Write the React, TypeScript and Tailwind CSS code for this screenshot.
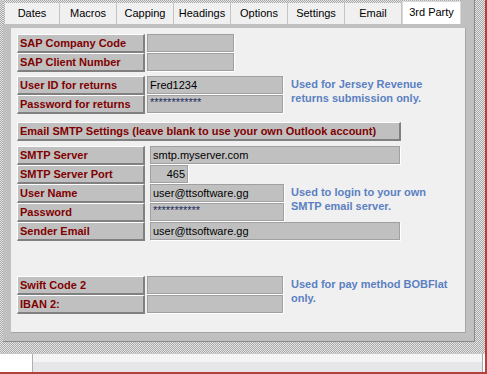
import React from "react";

const noise =
  "bg-[repeating-conic-gradient(#a9a9a9_0%_25%,#e4e4e4_0%_50%)] bg-[length:2px_2px]";

function Label({ children, w = "w-[128px]" }: { children: React.ReactNode; w?: string }) {
  return (
    <div
      className={`${w} h-[19px] shrink-0 bg-[#c0c0c0] border-t border-l border-b-2 border-r-2 border-t-white border-l-white border-b-[#808080] border-r-[#808080] pl-[2px] flex items-center text-[#800000] font-bold whitespace-nowrap leading-none`}
    >
      {children}
    </div>
  );
}

function Value({
  w,
  children,
  right,
  pwd,
}: {
  w: string;
  children?: React.ReactNode;
  right?: boolean;
  pwd?: boolean;
}) {
  return (
    <div
      className={`${w} h-[18px] shrink-0 bg-[#c0c0c0] border border-[#a0a0a0] shadow-[1px_1px_0_#ffffff] flex ${
        pwd ? "items-start pt-[1px] text-[#1c2c5c]" : "items-center text-black"
      } ${right ? "justify-end pr-[2px]" : "pl-[2px]"} whitespace-nowrap leading-none`}
    >
      {children}
    </div>
  );
}

function Help({ children, ml }: { children: React.ReactNode; ml: string }) {
  return (
    <div className={`${ml} pt-[1px] font-bold text-[#5b80c2] leading-[14px] whitespace-nowrap`}>
      {children}
    </div>
  );
}

const tabs = [
  { name: "Dates", w: "w-[55px]" },
  { name: "Macros", w: "w-[57px]" },
  { name: "Capping", w: "w-[57px]" },
  { name: "Headings", w: "w-[57px]" },
  { name: "Options", w: "w-[57px]" },
  { name: "Settings", w: "w-[57px]" },
  { name: "Email", w: "w-[57px]" },
];

export default function App() {
  return (
    <div className="w-[487px] h-[374px] border-r-2 border-b-2 border-[#b4403c] bg-white flex flex-col font-['Liberation_Sans',Arial,sans-serif] text-[11px] overflow-hidden">
      <div className={`h-[353px] flex shrink-0 ${noise}`}>
        <div className="w-[3px] shrink-0" />
        <div className="w-[472px] h-[342px] shrink-0 flex flex-col bg-[#c0c0c0] border-r border-b border-[#8a8a8a]">
          {/* tabs */}
          <div className={`h-[24px] shrink-0 flex items-end pl-[2px] ${noise}`}>
            {tabs.map((t) => (
              <div
                key={t.name}
                className={`${t.w} h-[21px] shrink-0 bg-[#f0f0f0] border-r border-[#c4c4c4] flex items-center justify-center text-black leading-none`}
              >
                {t.name}
              </div>
            ))}
            <div className="w-[59px] h-[23px] shrink-0 bg-white border-t border-l border-r border-[#d8d8d8] flex items-center justify-center text-black leading-none pb-[2px]">
              3rd Party
            </div>
            <div className="flex-1 self-stretch bg-[#c0c0c0]" />
          </div>
          {/* panel */}
          <div className="flex-1 flex pt-[4px] pl-[8px] pr-[8px] pb-[8px]">
            <div className="flex-1 bg-[#f0f0f0] border-r border-b border-[#a4a4a4] pl-[6px] pt-[6px] flex flex-col">
              {/* SAP */}
              <div className="flex flex-col">
                <div className="flex gap-[2px]">
                  <Label>SAP Company Code</Label>
                  <Value w="w-[87px]" />
                </div>
                <div className="flex gap-[2px]">
                  <Label>SAP Client Number</Label>
                  <Value w="w-[87px]" />
                </div>
              </div>
              {/* Jersey */}
              <div className="flex mt-[4px]">
                <div className="flex flex-col">
                  <div className="flex gap-[2px]">
                    <Label>User ID for returns</Label>
                    <Value w="w-[136px]">Fred1234</Value>
                  </div>
                  <div className="flex gap-[2px]">
                    <Label>Password for returns</Label>
                    <Value w="w-[136px]" pwd>
                      ************
                    </Value>
                  </div>
                </div>
                <Help ml="ml-[8px]">
                  Used for Jersey Revenue
                  <br />
                  returns submission only.
                </Help>
              </div>
              {/* Email button */}
              <div className="mt-[8px]">
                <Label w="w-[384px]">Email SMTP Settings (leave blank to use your own Outlook account)</Label>
              </div>
              {/* SMTP */}
              <div className="flex flex-col mt-[5px]">
                <div className="flex gap-[5px]">
                  <Label>SMTP Server</Label>
                  <Value w="w-[250px]">smtp.myserver.com</Value>
                </div>
                <div className="flex gap-[5px]">
                  <Label>SMTP Server Port</Label>
                  <Value w="w-[38px]" right>
                    465
                  </Value>
                </div>
                <div className="flex">
                  <div className="flex flex-col">
                    <div className="flex gap-[5px]">
                      <Label>User Name</Label>
                      <Value w="w-[134px]">user@ttsoftware.gg</Value>
                    </div>
                    <div className="flex gap-[5px]">
                      <Label>Password</Label>
                      <Value w="w-[134px]" pwd>
                        ***********
                      </Value>
                    </div>
                  </div>
                  <Help ml="ml-[7px]">
                    Used to login to your own
                    <br />
                    SMTP email server.
                  </Help>
                </div>
                <div className="flex gap-[5px]">
                  <Label>Sender Email</Label>
                  <Value w="w-[250px]">user@ttsoftware.gg</Value>
                </div>
              </div>
              {/* Swift */}
              <div className="flex mt-[35px]">
                <div className="flex flex-col">
                  <div className="flex gap-[2px]">
                    <Label>Swift Code 2</Label>
                    <Value w="w-[136px]" />
                  </div>
                  <div className="flex gap-[2px]">
                    <Label>IBAN 2:</Label>
                    <Value w="w-[136px]" />
                  </div>
                </div>
                <Help ml="ml-[8px]">
                  Used for pay method BOBFlat
                  <br />
                  only.
                </Help>
              </div>
            </div>
          </div>
        </div>
        <div className="flex-1" />
      </div>
      {/* bottom bar */}
      <div className="h-[19px] shrink-0 flex border-t border-[#c8c8c8]">
        <div className="w-[33px] bg-white border-r border-[#b0b0b0]" />
        <div className="flex-1 bg-[linear-gradient(#f4f4f4_0%,#f4f4f4_45%,#e6e6e9_45%,#e6e6e9_100%)] border-r border-[#a8a8a8]" />
        <div className="w-[2px] bg-white" />
      </div>
    </div>
  );
}
